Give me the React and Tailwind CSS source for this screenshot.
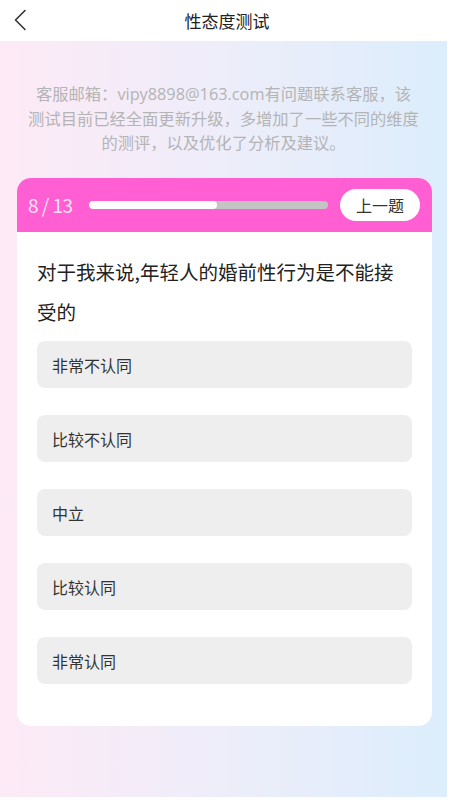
const options = ['非常不认同', '比较不认同', '中立', '比较认同', '非常认同']

function App() {
  const answered = 7
  const total = 13
  const pct = (answered / total) * 100

  return (
    <div className="w-[450px] h-[800px] bg-white flex flex-col" style={{ fontFamily: '"Noto Sans CJK SC", "Noto Sans", sans-serif' }}>
      <div className="h-[41px] flex items-center relative shrink-0">
        <svg className="absolute left-[13px] top-[9px]" width="14" height="22" viewBox="0 0 14 22" fill="none">
          <path d="M12 1.5 L2.5 11 L12 20.5" stroke="#333" strokeWidth="1.6" strokeLinecap="round" strokeLinejoin="round" />
        </svg>
        <div className="w-full text-center text-[17px] text-[#222] pl-[4px]">性态度测试</div>
      </div>

      <div className="flex-1 mr-[3px] mb-[3px] bg-gradient-to-r from-[#fdeaf6] via-[#eeedfa] to-[#dcedfc] flex flex-col">
        <div className="pt-[40px] text-center text-[16.3px] leading-[24px] text-[#b4b4b4] whitespace-nowrap">
          客服邮箱：<span style={{ fontFamily: '"Open Sans", sans-serif' }}>vipy8898@163.com</span>有问题联系客服，该
          <br />
          测试目前已经全面更新升级，多增加了一些不同的维度
          <br />
          的测评，以及优化了分析及建议。
        </div>

        <div className="mt-[24px] ml-[17px] mr-[15px] bg-white rounded-[14px] overflow-hidden">
          <div className="h-[54px] bg-[#ff5fd2] flex items-center pl-[11px] pr-[12px]">
            <div className="text-[19px] text-[#ffe0f5] shrink-0 tracking-[-0.5px]">
              8 / 13
            </div>
            <div className="w-[239px] h-[8px] rounded-full bg-[#c4c4c4] ml-[16px] overflow-hidden">
              <div className="h-full bg-white rounded-full" style={{ width: `${pct}%` }} />
            </div>
            <button className="ml-auto w-[80px] h-[32px] rounded-full bg-white text-[16px] text-[#333]">上一题</button>
          </div>

          <div className="px-[20px] pt-[20px] pb-[42px]">
            <div className="text-[19.5px] leading-[40px] text-[#222] pr-[16px]">
              对于我来说,年轻人的婚前性行为是不能接受的
            </div>
            <div className="mt-[9px] flex flex-col gap-[27px]">
              {options.map((o) => (
                <div key={o} className="h-[47px] rounded-[8px] bg-[#eeeeee] flex items-center px-[15px] text-[16px] text-[#333]">
                  {o}
                </div>
              ))}
            </div>
          </div>
        </div>
      </div>
    </div>
  )
}

export default App
